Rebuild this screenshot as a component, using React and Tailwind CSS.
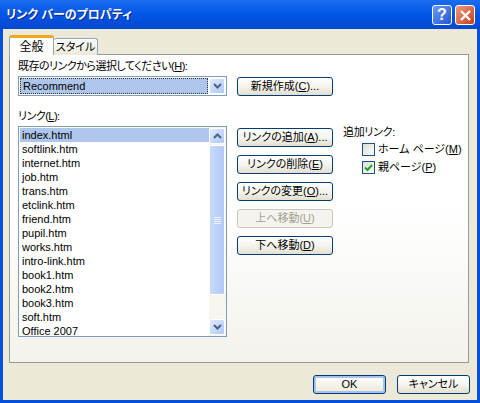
const font = { fontFamily: '"Liberation Sans","Noto Sans CJK JP",sans-serif', fontFeatureSettings: '"palt"' };

function U({ children }) {
  return <span className="underline underline-offset-1">{children}</span>;
}

function Btn({ children, disabled, def, className = "" }) {
  return (
    <div
      className={
        "flex items-center justify-center whitespace-nowrap rounded-[3px] border text-[11px] leading-none " +
        (disabled
          ? "border-[#c9c7ba] bg-[#f4f3ee] text-[#a1a192] "
          : def
          ? "border-[#003c74] bg-gradient-to-b from-[#ffffff] to-[#ece9d8] text-black shadow-[inset_0_0_0_2px_#a9c2ef] "
          : "border-[#003c74] bg-gradient-to-b from-[#ffffff] via-[#f5f4ee] to-[#e3dfd0] text-black ") +
        className
      }
    >
      {children}
    </div>
  );
}

function Arrow({ up }) {
  return (
    <svg width="9" height="6" viewBox="0 0 9 6" fill="none">
      <path
        d={up ? "M1 5L4.5 1.5L8 5" : "M1 1L4.5 4.5L8 1"}
        stroke="#4d6185"
        strokeWidth="2"
      />
    </svg>
  );
}

function ScrollBtn({ up }) {
  return (
    <div className="h-[16px] w-[16px] flex items-center justify-center rounded-[2px] border border-white bg-gradient-to-br from-[#e1eafe] to-[#aec8f7]">
      <Arrow up={up} />
    </div>
  );
}

function Check({ checked }) {
  return (
    <div className="h-[13px] w-[13px] shrink-0 flex items-center justify-center border border-[#1c5180] bg-gradient-to-br from-[#dcdcd7] to-[#ffffff]">
      {checked && (
        <svg width="9" height="9" viewBox="0 0 9 9" fill="none">
          <path d="M1 4.5L3.5 7L8 2" stroke="#21a121" strokeWidth="2" />
        </svg>
      )}
    </div>
  );
}

const links = [
  "index.html",
  "softlink.htm",
  "internet.htm",
  "job.htm",
  "trans.htm",
  "etclink.htm",
  "friend.htm",
  "pupil.htm",
  "works.htm",
  "intro-link.htm",
  "book1.htm",
  "book2.htm",
  "book3.htm",
  "soft.htm",
  "Office 2007",
];

export default function App() {
  return (
    <div
      style={font}
      className="w-[480px] h-[403px] flex flex-col overflow-hidden bg-[#0450dc] text-[11px] text-black"
    >
      <div className="h-[29px] shrink-0 flex items-center justify-between pl-[6px] pr-[5px] bg-gradient-to-b from-[#1a6cf0] via-[#0055e5] to-[#0348d0]">
        <div className="text-white font-bold text-[12px] leading-none pt-px [text-shadow:1px_1px_0_#0a2a8c]">
          リンク バーのプロパティ
        </div>
        <div className="flex gap-[3px] pt-px">
          <div className="w-[20px] h-[20px] flex items-center justify-center rounded-[3px] border border-white bg-gradient-to-br from-[#6f98f0] to-[#2255d5] text-white font-bold text-[16px] leading-none">
            ?
          </div>
          <div className="w-[20px] h-[20px] flex items-center justify-center rounded-[3px] border border-white bg-gradient-to-br from-[#ea9a7c] to-[#c83a10]">
            <svg width="13" height="13" viewBox="0 0 13 13" fill="none">
              <path d="M2 2L11 11M11 2L2 11" stroke="#fff" strokeWidth="2.4" />
            </svg>
          </div>
        </div>
      </div>

      <div className="flex-1 mx-[3px] mb-[3px] px-[6px] pt-[6px] bg-[#ece9d8] flex flex-col">
        <div className="h-[20px] flex items-end relative z-10 -mb-px">
          <div className="w-[45px] h-[20px] flex items-center justify-center rounded-t-[3px] border-x border-[#91a7b4] border-t-[3px] border-t-[#f0a81c] bg-white text-[12px] leading-none">
            全般
          </div>
          <div className="w-[44px] h-[17px] flex items-center justify-center whitespace-nowrap rounded-t-[3px] border-t border-r border-[#91a7b4] bg-gradient-to-b from-[#ffffff] to-[#ece9d8] text-[11px] leading-none">
            スタイル
          </div>
        </div>
        <div className="w-[460px] h-[309px] border border-[#919b9c] bg-gradient-to-b from-[#ffffff] via-[#ffffff] to-[#f3f2eb] pl-[8px] pt-[5px] flex flex-col">
          <div className="h-[13px] leading-[13px] whitespace-nowrap tracking-[-0.5px]">
            既存のリンクから選択してください(<U>H</U>):
          </div>
          <div className="mt-[3px] flex">
            <div className="w-[209px] h-[20px] shrink-0 border border-[#7f9db9] bg-white p-[1px] flex gap-[1px]">
              <div className="flex-1 bg-[#aec6ec] border border-dotted border-[#333] pl-[2px] leading-[14px]">
                Recommend
              </div>
              <div className="w-[16px] flex items-center justify-center rounded-[2px] border border-white bg-gradient-to-br from-[#e1eafe] to-[#aec8f7]">
                <Arrow />
              </div>
            </div>
            <Btn className="ml-[10px] mt-px w-[96px] h-[19px]">
              新規作成(<U>C</U>)...
            </Btn>
          </div>
          <div className="mt-[14px] h-[13px] leading-[13px] tracking-[-0.5px]">
            リンク(<U>L</U>):
          </div>
          <div className="mt-[3px] flex">
            <div className="w-[209px] h-[211px] shrink-0 border border-[#7f9db9] bg-white flex overflow-hidden">
              <div className="w-[190px] pt-[1px] pl-px overflow-hidden">
                {links.map((l, i) => (
                  <div
                    key={l}
                    className={
                      "h-[14px] leading-[14px] pl-[2px] whitespace-nowrap " +
                      (i === 0 ? "bg-[#aec6ec]" : "")
                    }
                  >
                    {l}
                  </div>
                ))}
              </div>
              <div className="w-[17px] pt-[1px] pb-[1px] flex flex-col bg-[#f6f5ee]">
                <ScrollBtn up />
                <div className="mt-px h-[150px] w-[16px] flex items-center justify-center rounded-[2px] border border-white bg-gradient-to-r from-[#c8d8fb] to-[#b3c9f7]">
                  <div className="flex flex-col gap-px">
                    <div className="w-[7px] h-px bg-[#eef4fe]" />
                    <div className="w-[7px] h-px bg-[#eef4fe]" />
                    <div className="w-[7px] h-px bg-[#eef4fe]" />
                    <div className="w-[7px] h-px bg-[#eef4fe]" />
                  </div>
                </div>
                <div className="flex-1" />
                <ScrollBtn />
              </div>
            </div>
            <div className="ml-[10px] w-[96px] shrink-0 flex flex-col gap-[8px] pt-[2px]">
              <Btn className="w-[96px] h-[19px]">
                リンクの追加(<U>A</U>)...
              </Btn>
              <Btn className="w-[96px] h-[19px]">
                リンクの削除(<U>E</U>)
              </Btn>
              <Btn className="w-[96px] h-[19px]">
                リンクの変更(<U>O</U>)...
              </Btn>
              <Btn disabled className="w-[96px] h-[19px]">
                上へ移動(<U>U</U>)
              </Btn>
              <Btn className="w-[96px] h-[19px]">
                下へ移動(<U>D</U>)
              </Btn>
            </div>
            <div className="ml-[10px] flex flex-col">
              <div className="h-[13px] leading-[13px] whitespace-nowrap tracking-[-0.3px]">追加リンク:</div>
              <div className="mt-[4px] ml-[19px] flex items-center gap-[3px] h-[13px]">
                <Check />
                <span className="whitespace-nowrap">ホーム ページ(<U>M</U>)</span>
              </div>
              <div className="mt-[5px] ml-[19px] flex items-center gap-[3px] h-[13px]">
                <Check checked />
                <span className="whitespace-nowrap">親ページ(<U>P</U>)</span>
              </div>
            </div>
          </div>
        </div>
        <div className="mt-[12px] flex justify-end gap-[11px] pr-[1px]">
          <Btn def className="w-[73px] h-[19px]">
            OK
          </Btn>
          <Btn className="w-[73px] h-[19px]">キャンセル</Btn>
        </div>
      </div>
    </div>
  );
}
